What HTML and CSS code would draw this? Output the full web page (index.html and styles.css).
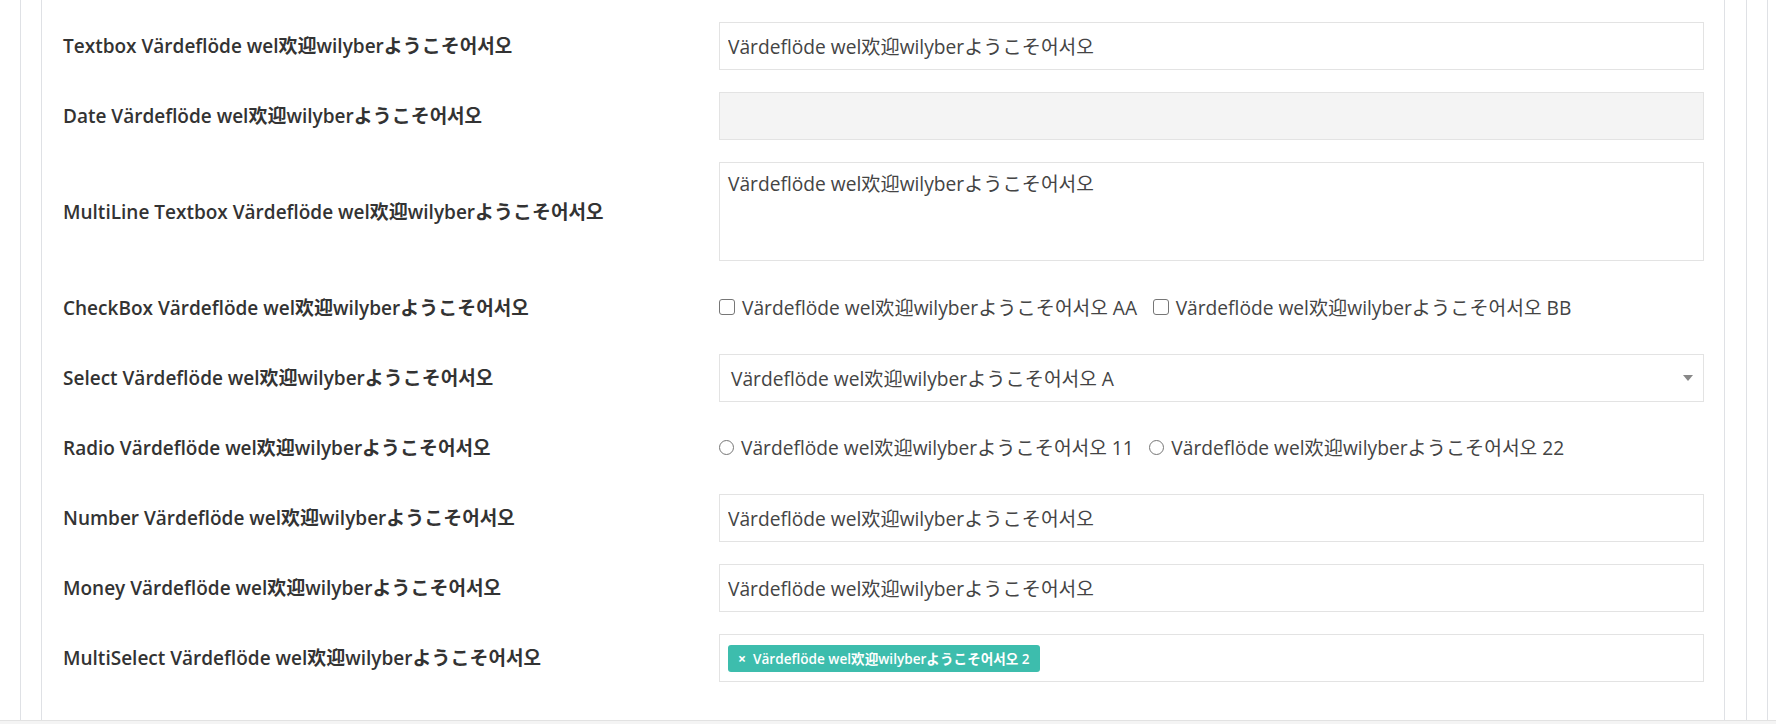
FILE: index.html
```html
<!DOCTYPE html>
<html>
<head>
<meta charset="utf-8">
<link rel="stylesheet" href="styles.css">
</head>
<body>
<div class="page">
  <div class="outer">
    <div class="mid">
      <div class="inner">
        <form class="form">
          <label class="lbl">Textbox Värdeflöde wel欢迎wilyberようこそ어서오</label>
          <div class="field"><input class="input" type="text" value="Värdeflöde wel欢迎wilyberようこそ어서오"></div>

          <label class="lbl">Date Värdeflöde wel欢迎wilyberようこそ어서오</label>
          <div class="field"><input class="input disabled" type="text" value="" disabled></div>

          <label class="lbl">MultiLine Textbox Värdeflöde wel欢迎wilyberようこそ어서오</label>
          <div class="field"><textarea class="textarea">Värdeflöde wel欢迎wilyberようこそ어서오</textarea></div>

          <label class="lbl">CheckBox Värdeflöde wel欢迎wilyberようこそ어서오</label>
          <div class="field choices tall">
            <label class="choice"><span class="box"></span>Värdeflöde wel欢迎wilyberようこそ어서오 AA</label>
            <label class="choice"><span class="box"></span>Värdeflöde wel欢迎wilyberようこそ어서오 BB</label>
          </div>

          <label class="lbl">Select Värdeflöde wel欢迎wilyberようこそ어서오</label>
          <div class="field"><div class="select"><span>Värdeflöde wel欢迎wilyberようこそ어서오 A</span><span class="caret"></span></div></div>

          <label class="lbl">Radio Värdeflöde wel欢迎wilyberようこそ어서오</label>
          <div class="field choices">
            <label class="choice"><span class="circle"></span>Värdeflöde wel欢迎wilyberようこそ어서오 11</label>
            <label class="choice"><span class="circle"></span>Värdeflöde wel欢迎wilyberようこそ어서오 22</label>
          </div>

          <label class="lbl">Number Värdeflöde wel欢迎wilyberようこそ어서오</label>
          <div class="field"><input class="input" type="text" value="Värdeflöde wel欢迎wilyberようこそ어서오"></div>

          <label class="lbl">Money Värdeflöde wel欢迎wilyberようこそ어서오</label>
          <div class="field"><input class="input" type="text" value="Värdeflöde wel欢迎wilyberようこそ어서오"></div>

          <label class="lbl">MultiSelect Värdeflöde wel欢迎wilyberようこそ어서오</label>
          <div class="field"><div class="multi"><span class="tag"><span class="x">×</span>Värdeflöde wel欢迎wilyberようこそ어서오 2</span></div></div>
        </form>
      </div>
    </div>
  </div>
</div>
</body>
</html>
```

FILE: styles.css
```css
* { box-sizing: border-box; }
html, body { margin: 0; padding: 0; }
body {
  background: #f4f4f4;
  font-family: "Open Sans", "Noto Sans CJK SC", sans-serif;
  color: #333;
}
.page {
  height: 721px;
  background: #fff;
  border-bottom: 1px solid #e2e2e2;
  display: flex;
}
.outer {
  margin-left: 20px;
  width: 1748px;
  border-left: 1px solid #dfe1e5;
  border-right: 1px solid #dfe1e5;
  padding-right: 20px;
  display: flex;
}
.mid {
  flex: 1;
  border-right: 1px solid #dfe1e5;
  padding-right: 21px;
  display: flex;
}
.inner {
  flex: 1;
  margin-left: 20px;
  border-left: 1px solid #dfe1e5;
  border-right: 1px solid #dfe1e5;
  padding: 22px 20px 0 21px;
}
.form {
  display: grid;
  grid-template-columns: 656px 985px;
  row-gap: 22px;
  align-items: center;
}
.lbl {
  font-weight: 600;
  font-size: 19px;
  color: #333;
  align-self: center;
  position: relative;
  top: -1px;
}
.field { min-height: 48px; display: flex; align-items: center; }
.input {
  width: 100%;
  height: 48px;
  border: 1px solid #e3e3e3;
  border-radius: 0;
  padding: 0 8px;
  font-family: "Open Sans", "Noto Sans CJK SC", sans-serif;
  font-size: 19.2px;
  color: #444;
  background: #fff;
  outline: none;
}
.input.disabled { background: #f4f4f4; }
.textarea {
  display: block;
  width: 100%;
  height: 99px;
  border: 1px solid #e3e3e3;
  padding: 8px 8px;
  font-family: "Open Sans", "Noto Sans CJK SC", sans-serif;
  font-size: 19.2px;
  line-height: 26px;
  color: #444;
  resize: none;
  outline: none;
}
.choices { gap: 15.5px; font-size: 19.2px; color: #444; }
.choices.tall { min-height: 49px; }
.choice { display: flex; align-items: center; gap: 7px; position: relative; top: -1px; }
.box {
  width: 16px; height: 16px;
  border: 1px solid #767676;
  border-radius: 3px;
  background: #fff;
}
.circle {
  width: 15px; height: 15px;
  border: 1px solid #767676;
  border-radius: 50%;
}
.select {
  width: 100%;
  height: 48px;
  border: 1px solid #e3e3e3;
  padding: 0 10px 0 11px;
  display: flex;
  align-items: center;
  justify-content: space-between;
  font-size: 19.2px;
  color: #444;
}
.caret {
  width: 0; height: 0;
  border-left: 5.5px solid transparent;
  border-right: 5.5px solid transparent;
  border-top: 6px solid #888;
}
.multi {
  width: 100%;
  height: 48px;
  border: 1px solid #e3e3e3;
  padding: 0 8px;
  display: flex;
  align-items: center;
}
.tag {
  background: #3dbdad;
  color: #fff;
  font-weight: 600;
  font-size: 13.6px;
  height: 27px;
  border-radius: 3px;
  padding: 0 10px 0 10px;
  display: flex;
  align-items: center;
}
.x { font-size: 14px; font-weight: 700; margin-right: 7px; }
```
